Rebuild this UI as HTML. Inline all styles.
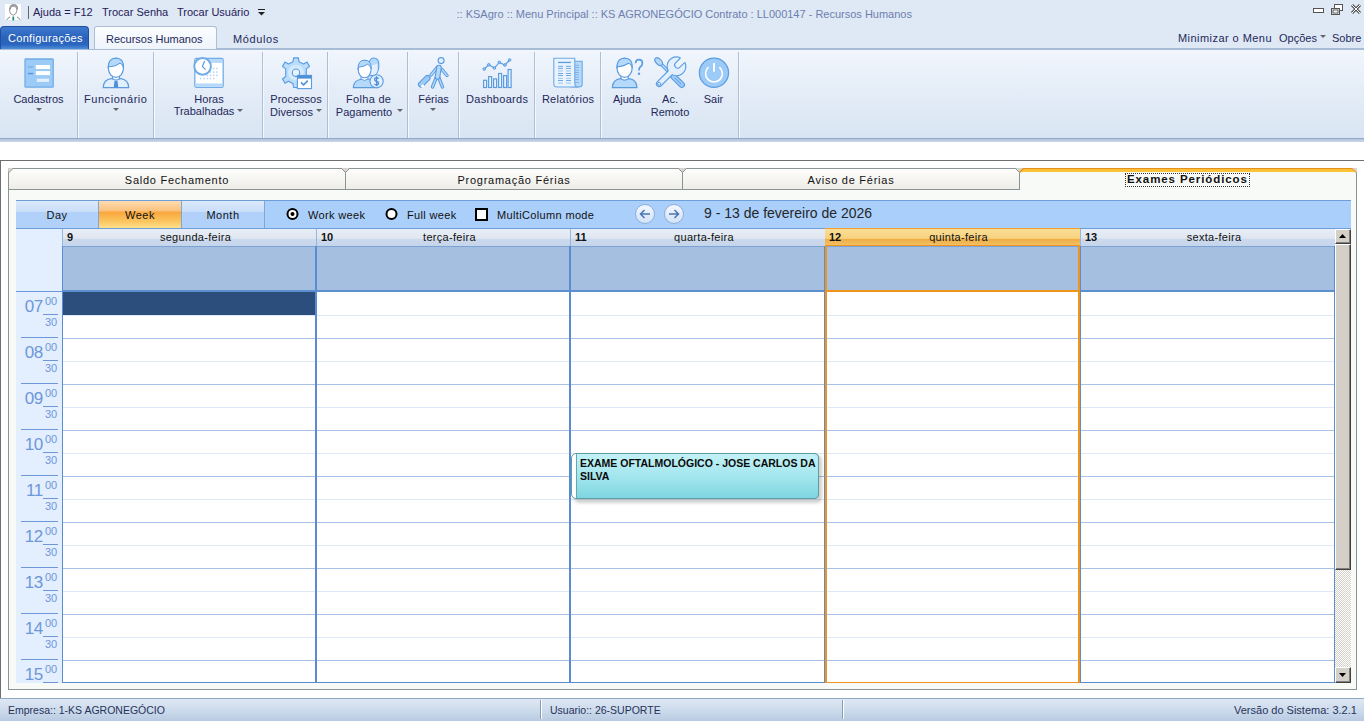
<!DOCTYPE html>
<html><head><meta charset="utf-8">
<style>

*{margin:0;padding:0;box-sizing:border-box}
html,body{width:1364px;height:721px;overflow:hidden;background:#fff;font-family:"Liberation Sans",sans-serif;font-size:11px;color:#1e2a44}
.a{position:absolute}
.t{position:absolute;white-space:nowrap;line-height:1}
/* title bar */
#title{left:0;top:0;width:1364px;height:49px;background:#dfe9f5}
#ribbon{left:0;top:49px;width:1364px;height:89px;background:linear-gradient(#f1f6fd,#e3ecf7 50%,#d9e5f3);border-top:1px solid #a9bcd6}
#ribshadow{left:0;top:138px;width:1364px;height:4px;background:linear-gradient(#93a9c6 0,#93a9c6 25%,#b3c5dc 25%,#cad7e7)}
.sep{position:absolute;top:52px;width:1px;height:86px;background:#adbfd7;box-shadow:1px 0 0 #f5f9fe}
.lbl{position:absolute;white-space:nowrap;line-height:12px;text-align:center;color:#23285a;font-size:11px}
.arr{position:absolute;width:0;height:0;border-left:3px solid transparent;border-right:3px solid transparent;border-top:3px solid #666}
/* main */
#frame{left:0;top:160px;width:1364px;height:538px;border-top:1px solid #6b6f72;border-left:1px solid #6b6f72;background:#fff}
.tab{position:absolute;top:168px;height:22px;background:linear-gradient(#fdfdfc,#eeede8);border-top:1px solid #8a9494;border-bottom:1px solid #8a9494;text-align:center;font-size:11px;letter-spacing:0.75px;color:#111;line-height:23px}
#page{left:8px;top:189px;width:1349px;height:501px;border-left:1px solid #8a9494;border-right:1px solid #8a9494;border-bottom:1px solid #8a9494;background:#f8faf8}
#tb{left:16px;top:200px;width:1335px;height:29px;background:#aacffb;border-top:1px solid #6e9ed8;border-bottom:1px solid #6e9ed8}
.vbtn{position:absolute;top:201px;height:27px;background:linear-gradient(#dbe9fc,#c9def9 40%,#b1d1fb 41%,#b1d1fb);border-right:1px solid #7ea6d8;text-align:center;line-height:29px;font-size:11px;color:#111;letter-spacing:0.5px}
#week{background:linear-gradient(#fddcb0,#fbc07a 38%,#f9a53a 40%,#fbc560 75%,#fde08a)}
.rt{position:absolute;top:209px;font-size:11px;color:#111;letter-spacing:0.35px;line-height:12px}
#gutter{left:16px;top:229px;width:46px;height:454px;background:#e3eefe}
.hdr{position:absolute;top:229px;height:17px;background:linear-gradient(#e8eef6,#dfe6f0 55%,#cad9ec 60%,#c6d5ea);border-left:1px solid #98b5de;font-size:11px;color:#111;line-height:16px}
.hdr b{position:absolute;left:4px;top:0;font-weight:bold;font-size:11px}
.hdr span{position:absolute;left:12px;right:0;text-align:center;letter-spacing:0.3px}
.allday{position:absolute;top:246px;height:46px;background:#a5bfe1;border-top:1px solid #7ca3d6;border-bottom:2px solid #5c8fd0}
.col{position:absolute;top:292px;height:391px;background:#fff}
.vline{position:absolute;background:#5b8cd0}
.hl{position:absolute;left:62px;width:1272px;height:1px;background:#a7c1e8}
.hh{position:absolute;left:62px;width:1272px;height:1px;background:#dde8f6}
.hour{position:absolute;left:16px;width:46px;height:46px;color:#6d97d8}
.hour .h{position:absolute;right:19px;top:6px;font-size:17px;line-height:17px;letter-spacing:-0.3px}
.hour .m{position:absolute;left:29px;top:4px;font-size:11px;line-height:11px}
.hour .m2{position:absolute;left:29px;top:25px;font-size:11px;line-height:11px}
.hour .u{position:absolute;left:27px;top:22px;width:15px;height:1px;background:#6d97d8}
.hour .l{position:absolute;left:5px;top:45px;width:37px;height:1px;background:#6d97d8}
#status{left:0;top:698px;width:1364px;height:23px;background:linear-gradient(#dfe8f4,#c9d8ea 60%,#b9cbe2);border-top:1px solid #8fa8c8;font-size:11px}
#status~.t{color:#27335a}

</style></head><body>
<div id="title" class="a"></div>
<div class="a" style="left:5px;top:4px;width:16px;height:16px;background:#fff"></div>
<svg class="a" style="left:5px;top:4px" width="17" height="17" viewBox="0 0 17 17">
<path d="M4.6 7 Q4.3 2.2 8.3 2.2 Q12 2.2 11.8 6.5 Q11.5 10.5 8.3 11.2 Q5 10.8 4.6 7Z" fill="#fff" stroke="#8c8c8c" stroke-width="0.9"/>
<path d="M4.8 5.5 Q5.5 1 9 1 Q12.5 1.2 12.2 5.5" fill="none" stroke="#9a9a9a" stroke-width="1.8"/>
<path d="M1.5 15.8 L5 12.8 M15.5 15.8 L12 12.8" stroke="#6d6d6d" stroke-width="0.9"/>
<path d="M8.3 12.5 L8.3 16.5" stroke="#1f8a7a" stroke-width="1.7"/>
</svg>
<div class="a" style="left:28px;top:6px;width:1px;height:13px;background:#666"></div>
<div class="t" style="left:33px;top:7px;font-size:11px;color:#1f2058">Ajuda = F12</div>
<div class="t" style="left:102px;top:7px;font-size:11px;color:#1f2058">Trocar Senha</div>
<div class="t" style="left:177px;top:7px;font-size:11px;color:#1f2058">Trocar Usuário</div>
<svg class="a" style="left:257px;top:9px" width="9" height="7"><rect x="1" y="0" width="7" height="1" fill="#222"/><path d="M1 3 L8 3 L4.5 6.5Z" fill="#222"/></svg>
<div class="t" style="left:456.5px;top:9px;font-size:11px;color:#6d7eb0">:: KSAgro :: Menu Principal :: KS AGRONEGÓCIO Contrato : LL000147 - Recursos Humanos</div>
<svg class="a" style="left:1312px;top:3px" width="52" height="14">
<rect x="1.5" y="5.5" width="10" height="4" fill="#fff" stroke="#555" stroke-width="1"/>
<rect x="22.5" y="1.5" width="8" height="6" fill="#fff" stroke="#555"/>
<rect x="19.5" y="5.5" width="8" height="6" fill="#fff" stroke="#555"/>
<rect x="21" y="7" width="5" height="3" fill="none" stroke="#555" stroke-width="1"/>
<path d="M40 2 L48 10 M48 2 L40 10" stroke="#555" stroke-width="3"/>
<path d="M40 2 L48 10 M48 2 L40 10" stroke="#fff" stroke-width="1"/>
</svg>
<div class="a" style="left:0;top:26px;width:89px;height:23px;border-radius:4px 4px 0 0;background:linear-gradient(#3d7ad0,#2a62b9 50%,#2b66c0 80%,#4f8edb);border:1px solid #1f4f9e;border-bottom:none"></div>
<div class="t" style="left:8px;top:33px;color:#fff;font-size:11px;letter-spacing:0.3px">Configurações</div>
<div class="a" style="left:94px;top:26px;width:123px;height:24px;border-radius:3px 3px 0 0;background:linear-gradient(#fbfdff,#eef4fb);border:1px solid #aebfd5;border-bottom:none"></div>
<div class="t" style="left:106px;top:34px;font-size:11px;color:#23285a">Recursos Humanos</div>
<div class="t" style="left:233px;top:34px;font-size:11px;letter-spacing:0.6px;color:#23285a">Módulos</div>
<div class="t" style="left:1178px;top:33px;font-size:11px;letter-spacing:0.45px;color:#23285a">Minimizar o Menu</div>
<div class="t" style="left:1279px;top:33px;font-size:11px;color:#23285a">Opções</div>
<div class="arr" style="left:1320px;top:35px"></div>
<div class="t" style="left:1332px;top:33px;font-size:11px;color:#23285a">Sobre</div>
<div id="ribbon" class="a"></div><div id="ribshadow" class="a"></div>
<div class="a" style="left:217px;top:48px;width:1147px;height:1px;background:#a9bcd6"></div>
<div class="sep" style="left:77px"></div>
<div class="sep" style="left:153px"></div>
<div class="sep" style="left:262px"></div>
<div class="sep" style="left:327px"></div>
<div class="sep" style="left:407px"></div>
<div class="sep" style="left:458px"></div>
<div class="sep" style="left:534px"></div>
<div class="sep" style="left:600px"></div>
<div class="sep" style="left:738px"></div>
<svg class="a" style="left:20px;top:54px" width="38" height="38" viewBox="0 0 38 38">
<rect x="5" y="5" width="28.2" height="28.2" rx="0.8" fill="#9dcbf8" stroke="#72ace8" stroke-width="1.3"/>
<rect x="15.8" y="11" width="14.2" height="4" fill="#fff"/>
<rect x="15.8" y="17.1" width="14.2" height="4" fill="#fff"/>
<rect x="16.8" y="24.7" width="12.2" height="3.2" fill="#e3f0fd"/>
<rect x="7.9" y="12.2" width="5.3" height="1.5" fill="#7db3ea"/>
<rect x="7.9" y="18.8" width="5.3" height="1.5" fill="#5a97db"/>
</svg>
<svg class="a" style="left:98px;top:54px" width="38" height="38" viewBox="0 0 38 38">
<path d="M5.2 33.6 Q5.5 25.5 13.5 24.6 L22.5 24.6 Q30.5 25.5 30.7 33.6 Z" fill="#e2f0fd" stroke="#5b9be0" stroke-width="1.2"/>
<path d="M14.5 21 L14.5 24.8 Q18 27.5 21.5 24.8 L21.5 21 Z" fill="#fff" stroke="#5b9be0" stroke-width="1.1"/>
<ellipse cx="17.9" cy="13.8" rx="7.6" ry="9.6" fill="#fff" stroke="#5b9be0" stroke-width="1.2"/>
<path d="M10.3 14.5 Q9.8 4.2 18 4.2 Q26 4.2 25.6 14 Q24.5 9.5 21.5 9.3 Q18 12.2 10.6 12.8 Z" fill="#b5d9fb" stroke="#5b9be0" stroke-width="1.1"/>
<path d="M16.5 27 L19.5 27 L20.3 33.6 L15.7 33.6 Z" fill="#4f8fd8"/>
</svg>
<svg class="a" style="left:190px;top:54px" width="38" height="38" viewBox="0 0 38 38">
<rect x="4.8" y="4.5" width="28.4" height="28.8" rx="1.6" fill="#fff" stroke="#72ace8" stroke-width="1.3"/>
<rect x="5.4" y="5.1" width="27.2" height="3.8" fill="#b5d9fb"/>
<rect x="5.4" y="29.5" width="27.2" height="3.2" fill="#b5d9fb"/>
<g fill="#b3d5f7">
<rect x="23" y="13.8" width="1.5" height="1.5"/><rect x="26.1" y="13.8" width="1.5" height="1.5"/>
<rect x="19.8" y="17.3" width="1.5" height="1.5"/><rect x="23" y="17.3" width="1.5" height="1.5"/><rect x="26.1" y="17.3" width="1.5" height="1.5"/>
<rect x="16.7" y="20.6" width="1.5" height="1.5"/><rect x="19.8" y="20.6" width="1.5" height="1.5"/><rect x="23" y="20.6" width="1.5" height="1.5"/><rect x="26.1" y="20.6" width="1.5" height="1.5"/>
<rect x="9.8" y="23.8" width="1.5" height="1.5"/><rect x="13.3" y="23.8" width="1.5" height="1.5"/><rect x="16.7" y="23.8" width="1.5" height="1.5"/><rect x="19.8" y="23.8" width="1.5" height="1.5"/><rect x="23" y="23.8" width="1.5" height="1.5"/>
</g>
<circle cx="12.6" cy="12.4" r="8.3" fill="#fff" stroke="#72ace8" stroke-width="2"/>
<path d="M14.6 7 L12.4 12.4 L15.6 15.6" fill="none" stroke="#5b9be0" stroke-width="1.2"/>
</svg>
<svg class="a" style="left:278px;top:54px" width="38" height="38" viewBox="0 0 38 38">
<g transform="translate(18 18.7)">
<path d="M-2.4 -14.8 L2.4 -14.8 L3 -11 L7.5 -8.6 L11 -10.6 L13.5 -6.3 L10.3 -3.8 L10.3 3.8 L13.5 6.3 L11 10.6 L7.5 8.6 L3 11 L2.4 14.8 L-2.4 14.8 L-3 11 L-7.5 8.6 L-11 10.6 L-13.5 6.3 L-10.3 3.8 L-10.3 -3.8 L-13.5 -6.3 L-11 -10.6 L-7.5 -8.6 L-3 -11 Z" fill="#b9dcfb" stroke="#5b9be0" stroke-width="1.1" stroke-linejoin="round"/>
<circle r="7.8" fill="#d6eafd"/>
<circle r="3.7" fill="#e8f2fb" stroke="#5b9be0" stroke-width="1.1"/>
</g>
<rect x="19.4" y="21.4" width="14.1" height="13.2" fill="#fff" stroke="#5b9be0" stroke-width="1.1"/>
<rect x="19.4" y="21.4" width="14.1" height="3.2" fill="#4f8fd8"/>
<path d="M23 28.4 L25.6 30.8 L29.8 26.6" fill="none" stroke="#4f8fd8" stroke-width="1.6"/>
</svg>
<svg class="a" style="left:350px;top:54px" width="38" height="38" viewBox="0 0 38 38">
<path d="M18 22 Q17 4 24 4 Q29.5 4 28.8 13 Q28.5 18 25 21 Z" fill="#b5d9fb" stroke="#5b9be0" stroke-width="1.1"/>
<path d="M20.5 11 Q24 11 27.5 10 L27.5 17 Q26 21 23.5 21 L20.5 21 Z" fill="#e2f0fd"/>
<path d="M3.3 33.6 Q3.5 26 11.5 25.2 L20 25.2 Q24 26 25 30 L25 33.6 Z" fill="#b5d9fb" stroke="#5b9be0" stroke-width="1.1"/>
<path d="M11 21 L11 25 Q14.5 28 18 25 L18 21 Z" fill="#fff" stroke="#5b9be0" stroke-width="1"/>
<ellipse cx="14.6" cy="15" rx="6.5" ry="8.8" fill="#fff" stroke="#5b9be0" stroke-width="1.1"/>
<path d="M8.2 15.5 Q7.5 6.2 14.6 6.2 Q21.5 6.2 21.2 14.5 Q20 11 17.5 10.2 Q14.5 12.8 8.5 13.2 Z" fill="#b5d9fb" stroke="#5b9be0" stroke-width="1"/>
<circle cx="26.6" cy="27.3" r="6.6" fill="#e2f0fd" stroke="#5b9be0" stroke-width="1.1"/>
<path d="M28.6 24.6 Q28 23.6 26.6 23.6 Q24.6 23.6 24.6 25.4 Q24.6 27 26.6 27.3 Q28.6 27.6 28.6 29.3 Q28.6 31 26.6 31 Q25 31 24.5 30 M26.6 22.2 L26.6 32.3" fill="none" stroke="#4f8fd8" stroke-width="1.3"/>
</svg>
<svg class="a" style="left:414px;top:54px" width="38" height="38" viewBox="0 0 38 38">
<g fill="none" stroke-linecap="round" stroke-linejoin="round">
<path d="M7 30.5 L13.5 24" stroke="#5b9be0" stroke-width="6.2"/>
<path d="M7 30.5 L13.5 24" stroke="#9dcbf8" stroke-width="4"/>
<path d="M17 21 L23.5 13 M28 15.5 L33 21.5 M22.5 23 L18.5 33 M24.5 23 L28.5 33" stroke="#5b9be0" stroke-width="3.4"/>
<path d="M17 21 L23.5 13 M28 15.5 L33 21.5 M22.5 23 L18.5 33 M24.5 23 L28.5 33" stroke="#b5d9fb" stroke-width="1.4"/>
<path d="M25 13.5 L23.5 23" stroke="#5b9be0" stroke-width="5.6"/>
<path d="M25 13.5 L23.5 23" stroke="#b5d9fb" stroke-width="3.4"/>
</g>
<circle cx="8.6" cy="32" r="1.5" fill="#fff"/>
<circle cx="27.1" cy="6.6" r="3" fill="#e2f0fd" stroke="#5b9be0" stroke-width="1.1"/>
</svg>
<svg class="a" style="left:478px;top:54px" width="38" height="38" viewBox="0 0 38 38">
<g fill="#e8f3fd" stroke="#5b9be0" stroke-width="1.2">
<rect x="5.6" y="26.3" width="3" height="7.2"/><rect x="10.6" y="22.6" width="3" height="10.9"/><rect x="15.6" y="24.9" width="3" height="8.6"/><rect x="20.6" y="19.5" width="3" height="14"/><rect x="25.6" y="21.6" width="3" height="11.9"/><rect x="30.1" y="15.5" width="3" height="18"/>
</g>
<path d="M6.2 15 L10.8 10.8 L16.4 14 L21.3 8.4 L26.9 11 L31.6 6" fill="none" stroke="#5b9be0" stroke-width="1.1"/>
<g fill="#9dcbf8" stroke="#5b9be0" stroke-width="1"><circle cx="6.2" cy="15" r="1.3"/><circle cx="10.8" cy="10.8" r="1.3"/><circle cx="16.4" cy="14" r="1.3"/><circle cx="21.3" cy="8.4" r="1.3"/><circle cx="26.9" cy="11" r="1.3"/><circle cx="31.6" cy="6" r="1.3"/></g>
</svg>
<svg class="a" style="left:549px;top:54px" width="38" height="38" viewBox="0 0 38 38">
<path d="M22 7.2 L33.2 7.2 L33.2 30 Q33.2 33 30 33 L22 33 Z" fill="#b5d9fb" stroke="#6ea8e6" stroke-width="1.1"/>
<g fill="#7db3ea"><rect x="25.5" y="10.8" width="4.5" height="1"/><rect x="25.5" y="13" width="4.5" height="1"/><rect x="25.5" y="15.8" width="4.5" height="1"/><rect x="25.5" y="18" width="4.5" height="1"/><rect x="25.5" y="20.3" width="4.5" height="1"/><rect x="25.5" y="22.8" width="4.5" height="1"/><rect x="25.5" y="25.1" width="4.5" height="1"/><rect x="25.5" y="27.9" width="4.5" height="1"/></g>
<path d="M4.8 4.2 L25.8 4.2 L25.8 29.5 Q25.8 33 29.5 33 L8 33 Q4.8 33 4.8 29.5 Z" fill="#e8f3fd" stroke="#6ea8e6" stroke-width="1.1"/>
<rect x="9" y="7.8" width="13" height="1.3" fill="#5b9be0"/>
<g fill="#6ea8e6"><rect x="9" y="11.8" width="5" height="1"/><rect x="17" y="11.8" width="5" height="1"/><rect x="9" y="13.9" width="5" height="1"/><rect x="17" y="13.9" width="5" height="1"/><rect x="9" y="19" width="5" height="1"/><rect x="17" y="19" width="5" height="1"/><rect x="9" y="21" width="5" height="1"/><rect x="17" y="21" width="5" height="1"/><rect x="9" y="26" width="5" height="1"/><rect x="17" y="26" width="5" height="1"/></g>
<g fill="#a8cdf2"><rect x="9" y="16.3" width="5" height="1.2"/><rect x="17" y="16.3" width="5" height="1.2"/><rect x="9" y="23.8" width="5" height="1.2"/><rect x="17" y="23.8" width="5" height="1.2"/><rect x="9" y="28.5" width="5" height="1.2"/><rect x="17" y="28.5" width="5" height="1.2"/></g>
</svg>
<svg class="a" style="left:608px;top:54px" width="38" height="38" viewBox="0 0 38 38">
<path d="M4.4 33.6 Q4.6 25.5 12.5 24.6 L21 24.6 Q28.8 25.5 28.9 33.6 Z" fill="#b5d9fb" stroke="#5b9be0" stroke-width="1.2"/>
<path d="M13 21 L13 24.8 Q16.6 27.5 20.2 24.8 L20.2 21 Z" fill="#fff" stroke="#5b9be0" stroke-width="1.1"/>
<ellipse cx="16.6" cy="13.8" rx="7.6" ry="9.6" fill="#fff" stroke="#5b9be0" stroke-width="1.2"/>
<path d="M9 14.5 Q8.5 4.2 16.6 4.2 Q24.8 4.2 24.3 14 Q23.2 9.5 20.2 9.3 Q16.6 12.2 9.3 12.8 Z" fill="#b5d9fb" stroke="#5b9be0" stroke-width="1.1"/>
<path d="M27.6 9.2 Q27.8 5.6 31 5.6 Q34.4 5.6 34.4 9 Q34.4 11.5 32 13.2 Q31 14 31 16.5" fill="none" stroke="#5b9be0" stroke-width="1.7"/>
<circle cx="31" cy="19.8" r="1.2" fill="#5b9be0"/>
</svg>
<svg class="a" style="left:651px;top:54px" width="38" height="38" viewBox="0 0 38 38">
<g stroke-linecap="round" fill="none">
<path d="M22.5 22.5 L30.8 30.8" stroke="#5b9be0" stroke-width="6.4"/>
<path d="M22.5 22.5 L30.8 30.8" stroke="#9dcbf8" stroke-width="4.2"/>
<path d="M24.2 24.2 L30 30" stroke="#5b9be0" stroke-width="1"/>
<path d="M10 10 L20 20" stroke="#5b9be0" stroke-width="3.6"/>
<path d="M10 10 L20 20" stroke="#b5d9fb" stroke-width="1.6"/>
</g>
<ellipse cx="7.6" cy="7.6" rx="4.6" ry="2.7" transform="rotate(45 7.6 7.6)" fill="#b5d9fb" stroke="#5b9be0" stroke-width="1.1"/>
<g stroke="#5b9be0">
<path d="M8.2 29.8 L20.8 17.2" stroke-width="6.6" stroke-linecap="round"/>
<path d="M28.6 4.1 L24.2 8.5 A3.6 3.6 0 0 0 29.3 13.6 L33.7 9.2 A8.8 8.8 0 1 1 28.6 4.1 Z" fill="#e2f0fd" stroke-width="2.2" stroke-linejoin="round"/>
</g>
<g stroke="none">
<path d="M8.2 29.8 L20.8 17.2" stroke="#e2f0fd" stroke-width="4.4" stroke-linecap="round"/>
<path d="M28.6 4.1 L24.2 8.5 A3.6 3.6 0 0 0 29.3 13.6 L33.7 9.2 A8.8 8.8 0 1 1 28.6 4.1 Z" fill="#e2f0fd"/>
</g>
<circle cx="8.2" cy="29.8" r="1.5" fill="none" stroke="#5b9be0" stroke-width="1"/>
</svg>
<svg class="a" style="left:695px;top:54px" width="38" height="38" viewBox="0 0 38 38">
<circle cx="18.96" cy="18.8" r="14.6" fill="#9dcbf8" stroke="#5b9be0" stroke-width="1.2"/>
<path d="M13.5 13.2 A8.4 8.4 0 1 0 24.4 13.2" fill="none" stroke="#fff" stroke-width="1.6"/>
<path d="M19 9 L19 17.7" stroke="#fff" stroke-width="1.8"/>
</svg>

<div class="lbl" style="left:-11.5px;width:100px;top:93px;letter-spacing:0px">Cadastros</div>
<div class="lbl" style="left:65.775px;width:100px;top:93px;letter-spacing:0.55px">Funcionário</div>
<div class="lbl" style="left:159.0px;width:100px;top:93px;letter-spacing:0px">Horas</div>
<div class="lbl" style="left:154.0px;width:100px;top:105px;letter-spacing:0px">Trabalhadas</div>
<div class="lbl" style="left:246.0px;width:100px;top:93px;letter-spacing:0px">Processos</div>
<div class="lbl" style="left:241.5px;width:100px;top:106px;letter-spacing:0px">Diversos</div>
<div class="lbl" style="left:318.65px;width:100px;top:93px;letter-spacing:0.3px">Folha de</div>
<div class="lbl" style="left:314.0px;width:100px;top:106px;letter-spacing:0px">Pagamento</div>
<div class="lbl" style="left:383.5px;width:100px;top:93px;letter-spacing:0px">Férias</div>
<div class="lbl" style="left:447.15px;width:100px;top:93px;letter-spacing:0.3px">Dashboards</div>
<div class="lbl" style="left:518.15px;width:100px;top:93px;letter-spacing:0.3px">Relatórios</div>
<div class="lbl" style="left:577.0px;width:100px;top:93px;letter-spacing:0px">Ajuda</div>
<div class="lbl" style="left:620.0px;width:100px;top:93px;letter-spacing:0px">Ac.</div>
<div class="lbl" style="left:620.0px;width:100px;top:106px;letter-spacing:0px">Remoto</div>
<div class="lbl" style="left:663.5px;width:100px;top:93px;letter-spacing:0px">Sair</div>
<div class="arr" style="left:36px;top:108px"></div>
<div class="arr" style="left:113px;top:108px"></div>
<div class="arr" style="left:237px;top:109px"></div>
<div class="arr" style="left:316px;top:109px"></div>
<div class="arr" style="left:397px;top:109px"></div>
<div class="arr" style="left:430px;top:108px"></div>
<div id="frame" class="a"></div>
<div id="page" class="a"></div>
<div class="tab" style="left:8px;width:338px;border-left:1px solid #8a9494;border-right:1px solid #8a9494">Saldo Fechamento</div>
<div class="tab" style="left:345px;width:338px;border-left:1px solid #8a9494;border-right:1px solid #8a9494">Programação Férias</div>
<div class="tab" style="left:682px;width:338px;border-left:1px solid #8a9494;border-right:1px solid #8a9494">Aviso de Férias</div>
<div class="a" style="left:1019px;top:168px;width:338px;height:22px;background:#f8faf8;border-right:1px solid #8a9494"></div>
<div class="a" style="left:1019px;top:168px;width:338px;height:4px;background:linear-gradient(#e8901c 0,#e8901c 25%,#fcbf34 25%,#fdc43c)"></div>
<div class="a" style="left:1019px;top:168px;width:1px;height:22px;background:#8a9494"></div>
<svg class="a" style="left:0;top:160px" width="1364" height="14">
<path d="M8 8 L13 8 L8.5 12.5Z" fill="#d8d4cc"/><path d="M13 8.5 L8.5 13" stroke="#8a9494" stroke-width="1"/>
<path d="M341.5 8 L349.5 8 L345.5 12Z" fill="#d8d4cc"/><path d="M341.5 8.5 L345.5 12.5 L349.5 8.5" fill="none" stroke="#8a9494" stroke-width="1"/>
<path d="M678.5 8 L686.5 8 L682.5 12Z" fill="#d8d4cc"/><path d="M678.5 8.5 L682.5 12.5 L686.5 8.5" fill="none" stroke="#8a9494" stroke-width="1"/>
<path d="M1015.5 8 L1023.5 8 L1019.5 12Z" fill="#d8d4cc"/><path d="M1015.5 8.5 L1019.5 12.5" fill="none" stroke="#8a9494" stroke-width="1"/><path d="M1019.5 12.5 L1023.5 8.5" fill="none" stroke="#e8901c" stroke-width="1.2"/>
<path d="M1352 8 L1357 8 L1357 13Z" fill="#d8d4cc"/><path d="M1352 8.5 L1356.5 13" stroke="#e8901c" stroke-width="1"/>
</svg>
<div class="t" style="left:1126px;top:174px;font-size:11.5px;font-weight:bold;letter-spacing:0.9px;color:#111;outline:1px dotted #333;outline-offset:0px;padding:0 1px">Exames Periódicos</div>
<div id="tb" class="a"></div>
<div class="vbtn" style="left:16px;width:83px">Day</div>
<div class="vbtn" id="week" style="left:99px;width:83px">Week</div>
<div class="vbtn" style="left:182px;width:83px">Month</div>
<svg class="a" style="left:286px;top:207px" width="14" height="14"><circle cx="6.5" cy="7" r="5" fill="#fff" stroke="#000" stroke-width="2"/><circle cx="6.5" cy="7" r="2" fill="#000"/></svg>
<div class="rt" style="left:308px">Work week</div>
<svg class="a" style="left:385px;top:207px" width="14" height="14"><circle cx="6.5" cy="7" r="5" fill="#fff" stroke="#000" stroke-width="2"/></svg>
<div class="rt" style="left:407px">Full week</div>
<div class="a" style="left:475px;top:208px;width:13px;height:13px;border:2px solid #000;background:#fff"></div>
<div class="rt" style="left:497px">MultiColumn mode</div>
<svg class="a" style="left:0;top:0" width="700" height="230"><defs><linearGradient id="g645" x1="0" y1="0" x2="0" y2="1"><stop offset="0" stop-color="#f4f8fe"/><stop offset="1" stop-color="#d2e2f7"/></linearGradient></defs><circle cx="645" cy="214" r="9.5" fill="url(#g645)" stroke="#8aaedb" stroke-width="1"/><path d="M650 214 L640.5 214 M644.5 210 L640.5 214 L644.5 218" fill="none" stroke="#4a74b4" stroke-width="1.5"/></svg>
<svg class="a" style="left:0;top:0" width="700" height="230"><defs><linearGradient id="g674" x1="0" y1="0" x2="0" y2="1"><stop offset="0" stop-color="#f4f8fe"/><stop offset="1" stop-color="#d2e2f7"/></linearGradient></defs><circle cx="674" cy="214" r="9.5" fill="url(#g674)" stroke="#8aaedb" stroke-width="1"/><path d="M669 214 L678.5 214 M674.5 210 L678.5 214 L674.5 218" fill="none" stroke="#4a74b4" stroke-width="1.5"/></svg>
<div class="t" style="left:704px;top:206px;font-size:14px;color:#262626">9 - 13 de fevereiro de 2026</div>
<div id="gutter" class="a"></div>
<div class="a" style="left:16px;top:291px;width:46px;height:1px;background:#6d97d8"></div>
<div class="hdr" style="left:62px;width:254px"><b>9</b><span>segunda-feira</span></div>
<div class="allday" style="left:62px;width:254px"></div>
<div class="col" style="left:62px;width:254px"></div>
<div class="hdr" style="left:316px;width:254px"><b>10</b><span>terça-feira</span></div>
<div class="allday" style="left:316px;width:254px"></div>
<div class="col" style="left:316px;width:254px"></div>
<div class="hdr" style="left:570px;width:255px"><b>11</b><span>quarta-feira</span></div>
<div class="allday" style="left:570px;width:255px"></div>
<div class="col" style="left:570px;width:255px"></div>
<div class="hdr" style="left:825px;width:255px;background:linear-gradient(#f9de96,#f7d27e 55%,#eeac45 60%,#f3c46a);border-left:none;border-top:1px solid #f0a030;top:228px;height:18px;line-height:17px"><b>12</b><span>quinta-feira</span></div>
<div class="allday" style="left:825px;width:255px"></div>
<div class="col" style="left:825px;width:255px"></div>
<div class="hdr" style="left:1080px;width:255px"><b>13</b><span>sexta-feira</span></div>
<div class="allday" style="left:1080px;width:255px"></div>
<div class="col" style="left:1080px;width:255px"></div>
<div class="hh" style="top:315px"></div>
<div class="hl" style="top:338px"></div>
<div class="hh" style="top:361px"></div>
<div class="hl" style="top:384px"></div>
<div class="hh" style="top:407px"></div>
<div class="hl" style="top:430px"></div>
<div class="hh" style="top:453px"></div>
<div class="hl" style="top:476px"></div>
<div class="hh" style="top:499px"></div>
<div class="hl" style="top:522px"></div>
<div class="hh" style="top:545px"></div>
<div class="hl" style="top:568px"></div>
<div class="hh" style="top:591px"></div>
<div class="hl" style="top:614px"></div>
<div class="hh" style="top:637px"></div>
<div class="hl" style="top:660px"></div>
<div class="a" style="left:62px;top:682px;width:1273px;height:1px;background:#5b8cd0"></div>
<div class="a" style="left:63px;top:292px;width:252px;height:23px;background:#2b4e7d"></div>
<div class="vline" style="left:62px;top:246px;width:1px;height:437px"></div>
<div class="vline" style="left:315px;top:246px;width:2px;height:437px"></div>
<div class="vline" style="left:569px;top:246px;width:2px;height:437px"></div>
<div class="vline" style="left:824px;top:246px;width:1px;height:437px"></div>
<div class="vline" style="left:1080px;top:246px;width:1px;height:437px"></div>
<div class="vline" style="left:1334px;top:246px;width:1px;height:437px"></div>
<div class="a" style="left:825px;top:246px;width:2px;height:437px;background:#f0941e"></div>
<div class="a" style="left:1078px;top:246px;width:2px;height:437px;background:#f0941e"></div>
<div class="a" style="left:825px;top:290px;width:255px;height:2px;background:#f0941e"></div>
<div class="a" style="left:825px;top:682px;width:255px;height:1px;background:#f0941e"></div>
<div class="a" style="left:825px;top:245px;width:255px;height:1px;background:#f0941e"></div>
<div class="hour" style="top:292px"><div class="h">07</div><div class="m">00</div><div class="u"></div><div class="m2">30</div><div class="l"></div></div>
<div class="hour" style="top:338px"><div class="h">08</div><div class="m">00</div><div class="u"></div><div class="m2">30</div><div class="l"></div></div>
<div class="hour" style="top:384px"><div class="h">09</div><div class="m">00</div><div class="u"></div><div class="m2">30</div><div class="l"></div></div>
<div class="hour" style="top:430px"><div class="h">10</div><div class="m">00</div><div class="u"></div><div class="m2">30</div><div class="l"></div></div>
<div class="hour" style="top:476px"><div class="h">11</div><div class="m">00</div><div class="u"></div><div class="m2">30</div><div class="l"></div></div>
<div class="hour" style="top:522px"><div class="h">12</div><div class="m">00</div><div class="u"></div><div class="m2">30</div><div class="l"></div></div>
<div class="hour" style="top:568px"><div class="h">13</div><div class="m">00</div><div class="u"></div><div class="m2">30</div><div class="l"></div></div>
<div class="hour" style="top:614px"><div class="h">14</div><div class="m">00</div><div class="u"></div><div class="m2">30</div><div class="l"></div></div>
<div class="hour" style="top:660px"><div class="h">15</div><div class="m">00</div><div class="u"></div></div>
<div class="a" style="left:574px;top:455px;width:248px;height:48px;border-radius:5px;background:rgba(0,0,0,0.18);filter:blur(1.5px)"></div>
<div class="a" style="left:571px;top:453px;width:248px;height:46px;border-radius:5px;background:#fff;border:1px solid #5e9ea3"></div>
<div class="a" style="left:576px;top:453px;width:243px;height:46px;border-radius:0 5px 5px 0;background:linear-gradient(#c3f2f6,#a4e6ee 50%,#7ed6e0);border:1px solid #5e9ea3;border-left:1px solid #6aa6ac"></div>
<div class="a" style="left:580px;top:457px;width:236px;font-size:10.5px;font-weight:bold;line-height:13px;color:#0a0a0a;white-space:normal">EXAME OFTALMOLÓGICO - JOSE CARLOS DA SILVA</div>
<div class="a" style="left:1335px;top:229px;width:16px;height:454px;background:repeating-conic-gradient(#d4d0c8 0 25%,#fff 0 50%) 0 0/2px 2px"></div>
<div class="a" style="left:1335px;top:229px;width:16px;height:15px;background:#d4d0c8;border-top:1px solid #fff;border-left:1px solid #fff;border-right:1px solid #404040;border-bottom:1px solid #404040;box-shadow:inset -1px -1px 0 #808080"></div>
<svg class="a" style="left:1339px;top:233px" width="8" height="6"><path d="M0 5 L7 5 L3.5 1Z" fill="#000"/></svg>
<div class="a" style="left:1335px;top:244px;width:16px;height:326px;background:#d4d0c8;border-top:1px solid #fff;border-left:1px solid #fff;border-right:1px solid #404040;border-bottom:1px solid #404040;box-shadow:inset -1px -1px 0 #808080"></div>
<div class="a" style="left:1335px;top:667px;width:16px;height:16px;background:#d4d0c8;border-top:1px solid #fff;border-left:1px solid #fff;border-right:1px solid #404040;border-bottom:1px solid #404040;box-shadow:inset -1px -1px 0 #808080"></div>
<svg class="a" style="left:1339px;top:672px" width="8" height="6"><path d="M0 1 L7 1 L3.5 5Z" fill="#000"/></svg>
<div id="status" class="a"></div>
<div class="t" style="left:8px;top:705px;font-size:10.5px">Empresa:: 1-KS AGRONEGÓCIO</div>
<div class="a" style="left:540px;top:700px;width:1px;height:19px;background:#8a9ab0;box-shadow:1px 0 0 #fff"></div>
<div class="t" style="left:550px;top:705px;font-size:10.5px">Usuario:: 26-SUPORTE</div>
<div class="a" style="left:842px;top:700px;width:1px;height:19px;background:#8a9ab0;box-shadow:1px 0 0 #fff"></div>
<div class="t" style="left:1234px;top:705px;font-size:11px">Versão do Sistema: 3.2.1</div>
</body></html>
